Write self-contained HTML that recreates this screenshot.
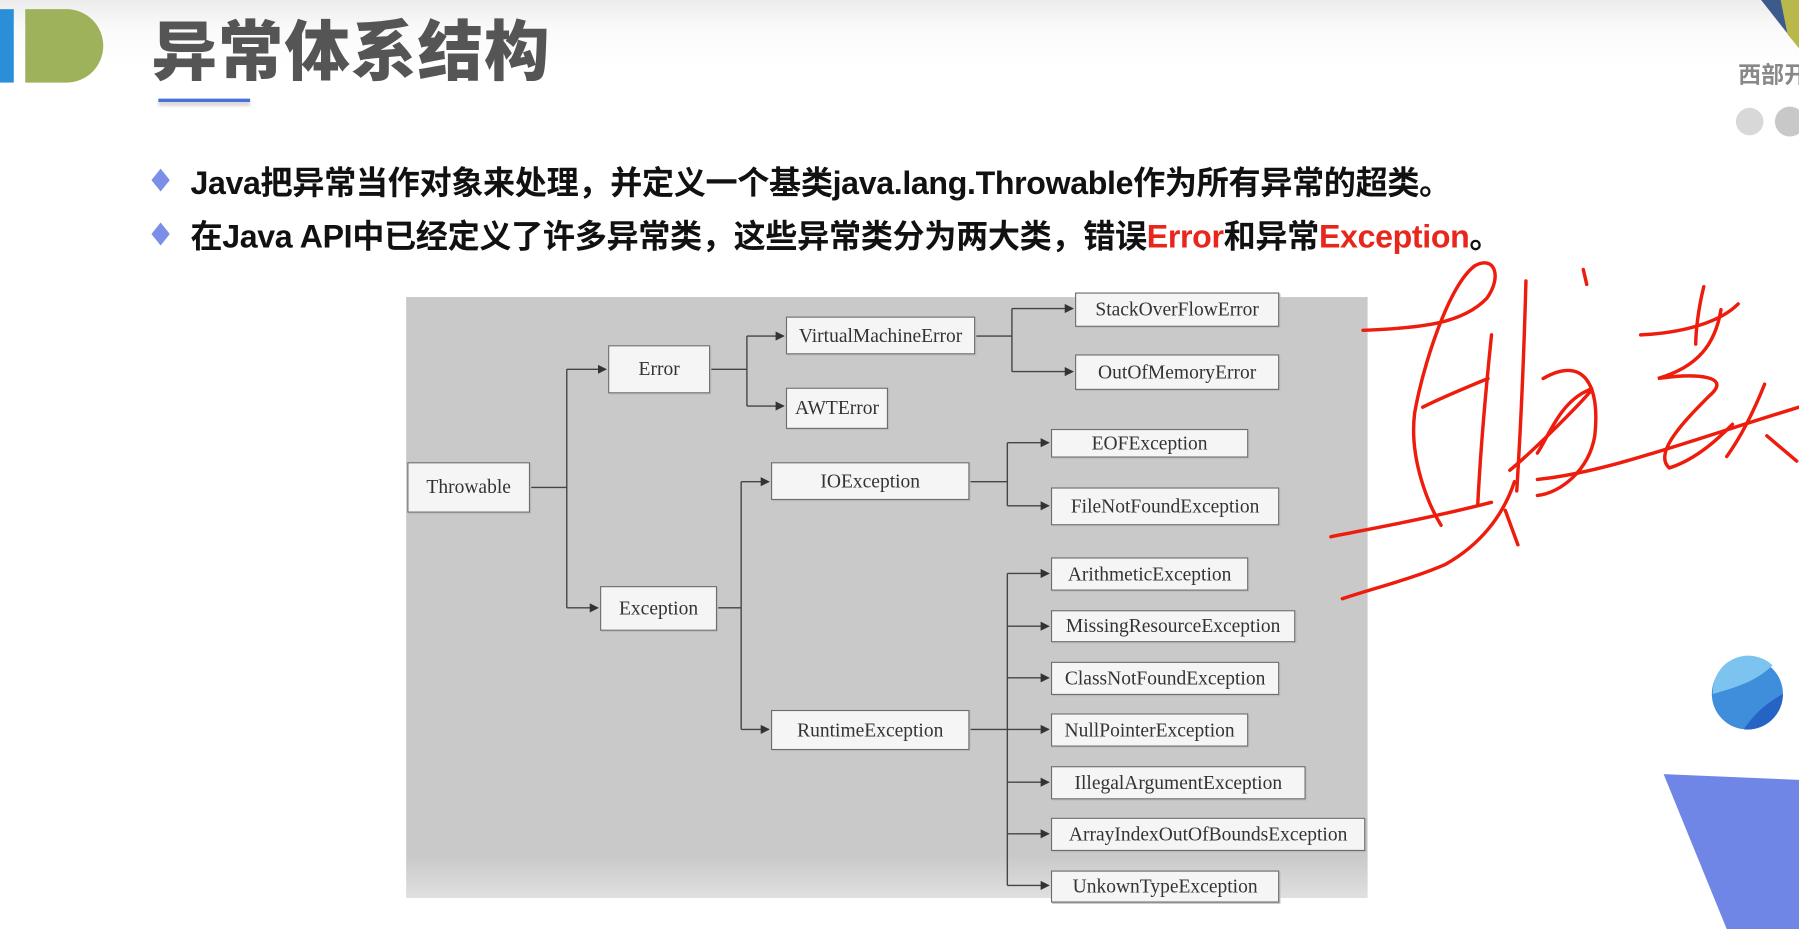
<!DOCTYPE html>
<html><head><meta charset="utf-8"><style>
html,body{margin:0;padding:0;width:1799px;height:929px;overflow:hidden;background:#fff}
#w{position:absolute;left:0;top:0;width:1568px;height:810px;transform:scale(1.14732,1.14691);transform-origin:0 0;background:linear-gradient(#ececec 0px,#fafafa 25px,#fff 60px);font-family:"Liberation Sans","Noto Sans CJK SC",sans-serif;overflow:hidden}
.a{position:absolute}
.t{font-weight:bold;font-size:28px;color:#111;white-space:nowrap;letter-spacing:-0.3px}
.r{color:#e8261b}
.b{position:absolute;background:#f5f5f5;border:1px solid #6d6d6d;box-shadow:1px 1px 0 #bbb;font-family:"Liberation Serif",serif;font-size:17px;color:#333;display:flex;align-items:center;justify-content:center;box-sizing:border-box;white-space:nowrap}
.d{width:16px;height:20px;background:#7b8fe8;clip-path:polygon(50% 0,100% 50%,50% 100%,0 50%)}
</style></head><body><div id="w">
<div class="a" style="left:0;top:8px;width:12px;height:64px;background:#2a8fd6"></div>
<div class="a" style="left:22px;top:8px;width:68px;height:64px;background:#9db25a;border-radius:0 34px 34px 0"></div>
<div class="a" style="left:132px;top:0px;font-size:57px;font-weight:900;color:#555;letter-spacing:1px;font-family:'Noto Sans CJK SC',sans-serif">异常体系结构</div>
<div class="a" style="left:138px;top:86px;width:80px;height:3px;background:#4a6fd8;box-shadow:0 3px 3px #ccc"></div>
<div class="a d" style="left:132px;top:147px"></div>
<div class="a d" style="left:132px;top:194px"></div>
<div class="a t" style="left:166px;top:138px">Java把异常当作对象来处理，并定义一个基类java.lang.Throwable作为所有异常的超类。</div>
<div class="a t" style="left:166px;top:185px">在Java API中已经定义了许多异常类，这些异常类分为两大类，错误<span class="r">Error</span>和异常<span class="r">Exception</span>。</div>

<div class="a" style="left:354px;top:259px;width:838px;height:524px;background:linear-gradient(#c9c9c9 93%,#e0e0e0)"></div>
<svg class="a" style="left:0;top:0" width="1568" height="810">
<defs><marker id="m" markerWidth="8" markerHeight="8" refX="7" refY="4" orient="auto" markerUnits="userSpaceOnUse"><path d="M0,0 L8,4 L0,8z" fill="#333"/></marker></defs>
<g stroke="#444" stroke-width="1.2" fill="none">
<path d="M462,425H494M494,322V530"/><path d="M494,322H528" marker-end="url(#m)"/><path d="M494,530H521" marker-end="url(#m)"/>
<path d="M619,322H651M651,293V354"/><path d="M651,293H683" marker-end="url(#m)"/><path d="M651,354H683" marker-end="url(#m)"/>
<path d="M850,293H882M882,269V324"/><path d="M882,269H935" marker-end="url(#m)"/><path d="M882,324H935" marker-end="url(#m)"/>
<path d="M625,530H646M646,420V636"/><path d="M646,420H670" marker-end="url(#m)"/><path d="M646,636H670" marker-end="url(#m)"/>
<path d="M845,420H878M878,386V441"/><path d="M878,386H914" marker-end="url(#m)"/><path d="M878,441H914" marker-end="url(#m)"/>
<path d="M845,636H878M878,500V772"/>
<path d="M878,500H914" marker-end="url(#m)"/><path d="M878,546H914" marker-end="url(#m)"/><path d="M878,591H914" marker-end="url(#m)"/><path d="M878,636H914" marker-end="url(#m)"/><path d="M878,682H914" marker-end="url(#m)"/><path d="M878,727H914" marker-end="url(#m)"/><path d="M878,772H914" marker-end="url(#m)"/>
</g></svg>
<div class="b" style="left:355px;top:403px;width:107px;height:44px">Throwable</div>
<div class="b" style="left:530px;top:301px;width:89px;height:42px">Error</div>
<div class="b" style="left:685px;top:276px;width:165px;height:33px">VirtualMachineError</div>
<div class="b" style="left:685px;top:338px;width:89px;height:36px">AWTError</div>
<div class="b" style="left:937px;top:255px;width:178px;height:30px">StackOverFlowError</div>
<div class="b" style="left:937px;top:309px;width:178px;height:31px">OutOfMemoryError</div>
<div class="b" style="left:672px;top:403px;width:173px;height:33px">IOException</div>
<div class="b" style="left:916px;top:374px;width:172px;height:25px">EOFException</div>
<div class="b" style="left:916px;top:425px;width:199px;height:33px">FileNotFoundException</div>
<div class="b" style="left:523px;top:511px;width:102px;height:39px">Exception</div>
<div class="b" style="left:672px;top:619px;width:173px;height:35px">RuntimeException</div>
<div class="b" style="left:916px;top:486px;width:172px;height:29px">ArithmeticException</div>
<div class="b" style="left:916px;top:532px;width:213px;height:28px">MissingResourceException</div>
<div class="b" style="left:916px;top:577px;width:199px;height:29px">ClassNotFoundException</div>
<div class="b" style="left:916px;top:622px;width:172px;height:29px">NullPointerException</div>
<div class="b" style="left:916px;top:668px;width:222px;height:29px">IllegalArgumentException</div>
<div class="b" style="left:916px;top:713px;width:274px;height:29px">ArrayIndexOutOfBoundsException</div>
<div class="b" style="left:916px;top:759px;width:199px;height:28px">UnkownTypeException</div>

<svg class="a" style="left:0;top:0" width="1568" height="810">
<polygon points="1535,0 1568,0 1568,42" fill="#3c5a8c"/><polygon points="1552,0 1568,0 1568,42 1558,30" fill="#b9b84a"/>
<circle cx="1525" cy="106" r="12" fill="#d8d8d8"/><circle cx="1560" cy="106" r="13" fill="#c8c8c8"/>
<circle cx="1523" cy="605" r="31" fill="#3f8edc"/><path d="M1493,600 A31,31 0 0 1 1545,580 C1530,595 1510,600 1493,605Z" fill="#7cc3ef"/><path d="M1520,636 C1530,620 1545,610 1554,605 A31,31 0 0 1 1520,636Z" fill="#2563c4"/>
<polygon points="1450,675 1568,680 1568,810 1505,810" fill="#6f86e6"/>
<g stroke="#ee1c0c" stroke-width="3" fill="none" stroke-linecap="round">
<path d="M1188,288 C1240,286 1275,282 1296,260 C1310,240 1302,222 1285,232 C1262,250 1240,320 1233,360 C1228,400 1245,440 1256,458"/>
<path d="M1240,355 C1260,345 1285,335 1297,330"/>
<path d="M1160,468 C1200,460 1245,452 1300,438"/>
<path d="M1170,522 C1200,512 1230,505 1260,492 C1290,475 1310,450 1320,420"/>
<path d="M1300,292 C1295,340 1290,400 1288,440"/>
<path d="M1330,245 C1328,320 1325,380 1322,428"/>
<path d="M1312,445 L1323,475"/>
<path d="M1316,410 C1340,390 1400,330 1385,340 C1360,350 1350,380 1340,395"/>
<path d="M1345,330 C1380,310 1395,335 1390,380 C1385,410 1360,430 1340,432"/>
<path d="M1380,235 L1383,248"/>
<path d="M1340,418 C1400,412 1470,385 1568,355"/>
<path d="M1430,292 C1470,290 1500,280 1515,265"/>
<path d="M1485,250 C1480,270 1478,290 1478,300"/>
<path d="M1500,270 C1495,300 1480,320 1445,330 C1480,325 1510,328 1490,345 C1470,365 1440,395 1455,408 C1480,400 1500,380 1510,370"/>
<path d="M1538,335 C1528,360 1518,380 1505,398"/>
<path d="M1540,380 L1566,402"/>
</g>
<text x="1515" y="72" font-family="Noto Sans CJK SC,sans-serif" font-weight="bold" font-size="20" fill="#888">西部开</text>
</svg>
</div></body></html>
